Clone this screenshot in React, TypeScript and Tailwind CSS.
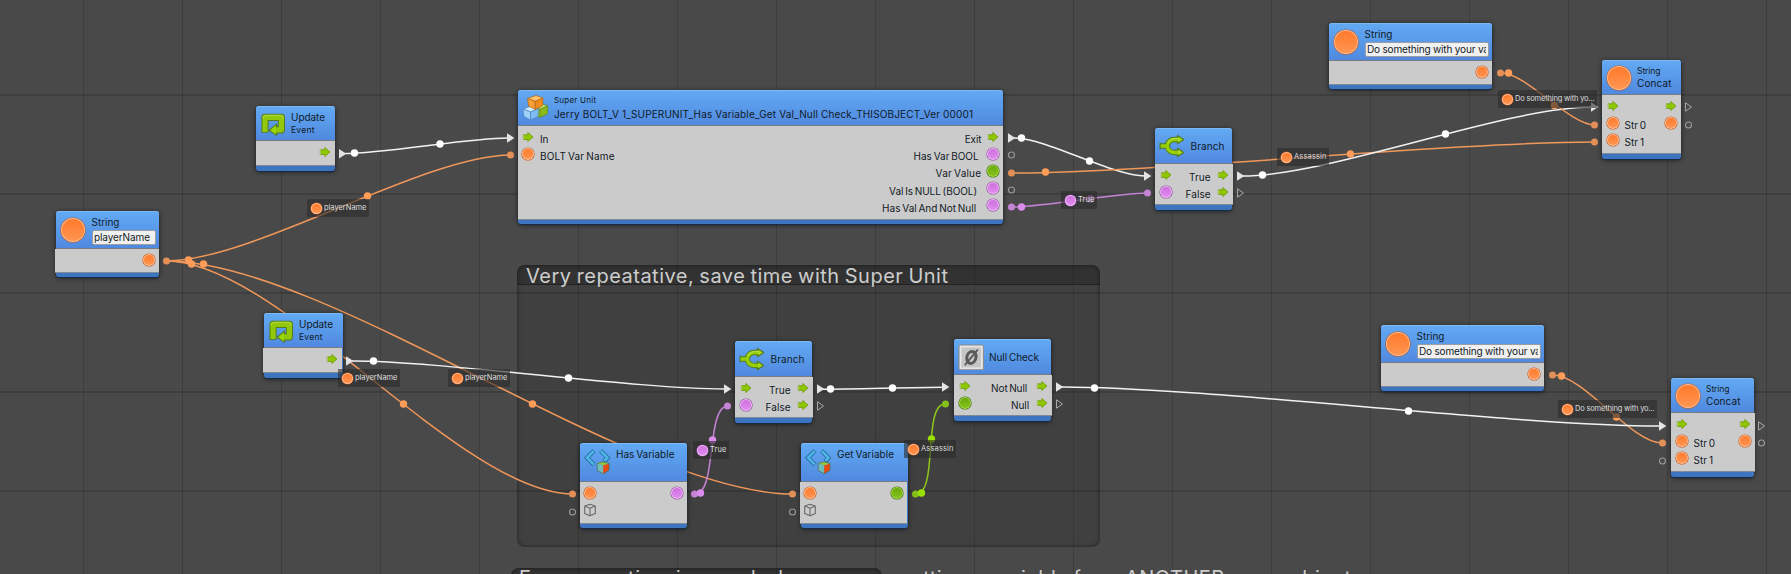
import React, { useLayoutEffect, useRef } from "react";

type Kind = "flow" | "orange" | "purple" | "green" | "cube";

/* Text whose letter spacing is adjusted so that it spans `w` pixels. */
function Fit({ children, w, className = "" }: { children: string; w: number; className?: string }) {
  const ref = useRef<HTMLSpanElement>(null);
  useLayoutEffect(() => {
    const el = ref.current;
    if (!el) return;
    el.style.letterSpacing = "0px";
    const natural = el.getBoundingClientRect().width;
    const gap = (w + 1 - natural) / Math.max(1, children.length - 1);
    el.style.letterSpacing = `${gap}px`;
    el.style.marginRight = `${-gap}px`;
  }, [children, w]);
  return (
    <span ref={ref} className={`inline-block shrink-0 whitespace-pre ${className}`}>
      {children}
    </span>
  );
}

const BALL: Record<string, [string, string, string, string]> = {
  orange: ["#ff7a2b", "#ff9552", "#ffc096", "#c4561c"],
  purple: ["#cf6fdd", "#e08cf0", "#f0bdf8", "#8d4a9b"],
  green: ["#6aa80e", "#85c41c", "#a5d84a", "#3f6d08"],
};

function Ball({ kind, size = 14 }: { kind: string; size?: number }) {
  const [a, b, rim, edge] = BALL[kind];
  const id = `ball-${kind}-${size}`;
  const k = size / 2;
  return (
    <svg width={size} height={size} viewBox={`0 0 ${size} ${size}`} className="block shrink-0">
      <defs>
        <linearGradient id={id} x1="0" y1="0" x2="0" y2="1">
          <stop offset="0" stopColor={a} />
          <stop offset="1" stopColor={b} />
        </linearGradient>
      </defs>
      <circle cx={k} cy={k} r={k - 0.4} fill={edge} />
      <circle cx={k} cy={k} r={k - 1} fill={rim} />
      <circle cx={k} cy={k} r={k - 1.9} fill={`url(#${id})`} />
    </svg>
  );
}

function PortIcon({ kind }: { kind: Kind }) {
  if (kind === "flow")
    return (
      <svg width="14" height="14" viewBox="0 0 14 14" className="block shrink-0">
        <path d="M2.3 4.8H6.8V2.5L12 7L6.8 11.5V9.4H2.3Z" fill="#8fc800" stroke="#6c9a08" strokeWidth=".8" strokeLinejoin="round" />
        <path d="M2.3 4.8V9.4" stroke="#bcc98a" strokeWidth="1" />
      </svg>
    );
  if (kind === "cube")
    return (
      <svg width="14" height="14" viewBox="0 0 14 14" className="block shrink-0" fill="none" stroke="#6a6a6a" strokeWidth="1.1" strokeLinejoin="round">
        <path d="M7 1.2L12.3 3V10.6L7 12.8L1.7 10.6V3ZM1.7 3L7 5.2L12.3 3M7 5.2V12.8" />
      </svg>
    );
  return <Ball kind={kind} />;
}

function UpdateIcon() {
  return (
    <svg width="26" height="26" viewBox="-1 -1 26 26" className="block" fill="none" strokeLinejoin="round">
      <path d="M4 19.8V4.3H20.4V16.8H15" stroke="#55791c" strokeWidth="7.2" />
      <path d="M15.6 10.8V22.6L8 17.2Z" fill="#55791c" stroke="#55791c" strokeWidth="1" />
      <path d="M4 19V4.3H20.4V16.8H14" stroke="#91c90a" strokeWidth="5.2" />
      <path d="M14.8 12V21.4L9.2 17.2Z" fill="#9bd800" />
      <path d="M2 5.4Q2 2.3 5 2.3H19.6Q22.4 2.3 22.4 5.4" stroke="#b5dd4e" strokeWidth=".9" />
    </svg>
  );
}

function BranchIcon() {
  return (
    <svg width="26" height="26" viewBox="-1 -1 26 26" className="block" fill="none" strokeLinejoin="round">
      <path d="M0 12H7Q8.5 5.5 14.5 5.5H18.5M7 12Q8.5 18.5 14.5 18.5H18.5" stroke="#55791c" strokeWidth="5.4" />
      <path d="M0 8.6V15.4M17.4 1.3L24 5.5L17.4 10ZM17.4 14L24 18.5L17.4 22.8Z" stroke="#55791c" strokeWidth="1" fill="#55791c" />
      <path d="M.6 12H7Q8.5 5.5 14.5 5.5H19M7 12Q8.5 18.5 14.5 18.5H19" stroke="#96cf08" strokeWidth="3.5" />
      <path d="M18.2 2.7L22.7 5.5L18.2 8.5ZM18.2 15.5L22.7 18.5L18.2 21.3Z" fill="#a3db1c" />
      <path d="M7.8 9Q10 4.6 14.5 4.6H18.4" stroke="#c3e768" strokeWidth=".8" />
    </svg>
  );
}

function NullIcon() {
  return (
    <svg width="26" height="26" viewBox="-1 -1 26 26" className="block" fill="none">
      <rect x="0" y="0" width="24.4" height="24.8" rx="1" fill="#dadada" stroke="#8d8d8d" />
      <rect x="1.8" y="1.8" width="20.8" height="21.2" fill="#c6c6c6" stroke="#eeeeee" />
      <ellipse cx="12.4" cy="12.4" rx="4.6" ry="6" stroke="#5a5a5a" strokeWidth="3" transform="skewX(-6) translate(1.3 0)" />
      <path d="M5.8 20.2L18.8 4.6" stroke="#5a5a5a" strokeWidth="1.8" />
    </svg>
  );
}

function VariableIcon() {
  return (
    <svg width="26" height="26" viewBox="-1 -1 26 26" className="block" fill="none" strokeLinejoin="miter">
      <path d="M9 .8L2 7.8L9 14.8M15.6 .8L22.6 7.8L19 11.4" stroke="#1d6290" strokeWidth="4.2" />
      <path d="M8.8 1.1L2.1 7.8L8.8 14.5M15.8 1.1L22.5 7.8L19.2 11.1" stroke="#4fb4e6" strokeWidth="2.8" />
      <path d="M12 13.6L18 11.8L24 13.4L18.4 15.6Z" fill="#93c83c" />
      <path d="M12 13.6L18.2 15.6V23.8L12.4 20.6Z" fill="#6fbcb8" />
      <path d="M18.2 15.6L24 13.4V20.2L18.2 23.8Z" fill="#e64c12" />
      <path d="M12 13.6L18 11.8L24 13.4V20.2L18.2 23.8L12.4 20.6Z" stroke="#4f6a4c" strokeWidth=".7" />
    </svg>
  );
}

function Cube({ x, y, c }: { x: number; y: number; c: [string, string, string, string] }) {
  return (
    <g transform={`translate(${x} ${y})`} stroke={c[3]} strokeWidth=".7" strokeLinejoin="round">
      <path d="M0 3L8.4 0L15.4 2.6L7.6 6Z" fill={c[0]} />
      <path d="M0 3L7.6 6V14L1 10.6Z" fill={c[1]} />
      <path d="M7.6 6L15.4 2.6L15 10.4L7.6 14Z" fill={c[2]} />
    </g>
  );
}

function SuperIcon() {
  return (
    <svg width="28" height="28" viewBox="-1 -1 28 28" className="block">
      <Cube x={9.4} y={8.4} c={["#c4e070", "#a6cc38", "#8abb1c", "#5f8a1c"]} />
      <Cube x={0} y={11} c={["#cfeaff", "#9fd0f8", "#7fbcf0", "#4a88c4"]} />
      <Cube x={4.6} y={0.4} c={["#ffc266", "#fa9f34", "#ef8a1c", "#b0681c"]} />
    </svg>
  );
}

interface Label {
  t: string;
  w: number;
  gap?: number;
}
interface Row {
  l?: Kind;
  lt?: Label;
  r?: Kind;
  rt?: Label;
}

interface NodeProps {
  box: string;
  head: string;
  body?: string;
  padL?: string;
  drop?: string;
  icon: React.ReactNode;
  title: React.ReactNode;
  rows: Row[];
}

function UnitNode({ box, head, body = "", padL = "pl-[3px]", drop = "pt-[5px]", icon, title, rows }: NodeProps) {
  return (
    <section
      className={`absolute flex flex-col rounded-[3px] bg-gradient-to-b from-[#4a80cc] to-[#3c74c0] shadow-[0_1px_1px_#182c48,0_1px_5px_rgba(0,0,0,0.6)] ${box}`}
    >
      <header
        className={`flex shrink-0 rounded-t-[3px] border-t border-b border-t-[#7dbaf5] border-b-[#777c84] bg-gradient-to-b from-[#62a9f3] to-[#5089df] pl-1 ${head}`}
      >
        {icon}
        {title}
      </header>
      <div className={`flex flex-1 flex-col border-b border-[#808a98] bg-[#cbcbcb] pt-[2px] ${body}`}>
        {rows.map((row, i) => (
          <div key={i} className="flex h-[17.2px] shrink-0 items-center justify-between">
            <div className={`flex items-center ${padL}`}>
              {row.l && <PortIcon kind={row.l} />}
              {row.lt && (
                <div className={`flex pl-[5px] ${drop}`}>
                  <Fit w={row.lt.w}>{row.lt.t}</Fit>
                </div>
              )}
            </div>
            <div className="flex items-center pr-[3.4px]">
              {row.rt && (
                <div className={`flex ${drop}`} style={{ paddingRight: row.rt.gap ?? 5 }}>
                  <Fit w={row.rt.w}>{row.rt.t}</Fit>
                </div>
              )}
              {row.r && <PortIcon kind={row.r} />}
            </div>
          </div>
        ))}
      </div>
    </section>
  );
}

function StringNode({ box, value, w, input, body }: { box: string; value: string; w: number; input: string; body?: string }) {
  return (
    <UnitNode
      box={box}
      head="h-[38px]"
      body={`mb-[4px] ${body ?? ""}`}
      icon={<div className="pt-[5px]"><Ball kind="orange" size={26} /></div>}
      title={
        <div className="flex flex-col items-start pt-[3px] pl-[5.5px]">
          <Fit w={27}>String</Fit>
          <div className={`mt-px flex h-[15px] rounded-[2px] border border-[#9a9da3] bg-[#f0f0f0] pr-[2px] pl-[1.5px] ${input}`}>
            <div className="flex min-w-0 flex-1 overflow-hidden [word-spacing:0px]">
              <Fit w={w} className="leading-[13px]">{value}</Fit>
            </div>
          </div>
        </div>
      }
      rows={[{ r: "orange" }]}
    />
  );
}

function UpdateNode({ box, body = "" }: { box: string; body?: string }) {
  return (
    <UnitNode
      box={box}
      head="h-[35px]"
      body={`mb-[5px] ${body}`}
      icon={<div className="pt-[5px]"><UpdateIcon /></div>}
      title={
        <div className="flex flex-col items-start pt-[3px] pl-[5px]">
          <Fit w={33}>Update</Fit>
          <Fit w={22.5} className="pt-px text-[8.5px] leading-[10px]">Event</Fit>
        </div>
      }
      rows={[{ r: "flow" }]}
    />
  );
}

function BranchNode({ box }: { box: string }) {
  return (
    <UnitNode
      box={box}
      head="h-[36px]"
      body="mb-[5px] -mr-px"
      padL="pl-[4px]"
      drop="pt-[4px]"
      icon={<div className="pt-[4px]"><BranchIcon /></div>}
      title={<div className="flex pt-[10px] pl-[5.5px]"><Fit w={33}>Branch</Fit></div>}
      rows={[
        { l: "flow", r: "flow", rt: { t: "True", w: 20.5 } },
        { l: "purple", r: "flow", rt: { t: "False", w: 24 } },
      ]}
    />
  );
}

function ConcatNode({ box, body = "" }: { box: string; body?: string }) {
  return (
    <UnitNode
      box={box}
      head="h-[35px]"
      body={`mb-[5px] ${body}`}
      padL="pl-[3.5px]"
      icon={<div className="pt-[4px]"><Ball kind="orange" size={26} /></div>}
      title={
        <div className="flex flex-col items-start pt-[5px] pl-[5px]">
          <Fit w={22.5} className="text-[8.5px] leading-[10px]">String</Fit>
          <Fit w={33.5}>Concat</Fit>
        </div>
      }
      rows={[
        { l: "flow", r: "flow" },
        { l: "orange", lt: { t: "Str 0", w: 20.5 }, r: "orange" },
        { l: "orange", lt: { t: "Str 1", w: 18.5 } },
      ]}
    />
  );
}

function VariableNode({ box, name, w, out, body = "" }: { box: string; name: string; w: number; out: Kind; body?: string }) {
  return (
    <UnitNode
      box={box}
      head="h-[39px]"
      body={`mb-[4px] ${body}`}
      padL="pl-[3px]"
      icon={<div className="pt-[5px]"><VariableIcon /></div>}
      title={<div className="flex pt-[3px] pl-[6px]"><Fit w={w}>{name}</Fit></div>}
      rows={[{ l: "orange", r: out }, { l: "cube" }]}
    />
  );
}

function ValueTag({ box, kind, text, w }: { box: string; kind: string; text: string; w: number }) {
  return (
    <div className={`absolute flex h-[18px] items-center bg-[#2c2c2c]/60 pl-[3px] text-[7.5px] text-[#dedede] [word-spacing:0px] ${box}`}>
      <Ball kind={kind} size={13} />
      <Fit w={w} className="ml-px leading-[10px]">{text}</Fit>
    </div>
  );
}

const COLORS = { w: "#f2f2f2", o: "#f0975a", p: "#c583d6", g: "#8fc61a" };
const DOTS = { w: "#ffffff", o: "#ff9c58", p: "#dc8ced", g: "#9be000" };
type C = keyof typeof COLORS;

const WIRES: [C, number, number, number, number][] = [
  ["w", 345, 153.5, 508, 138],
  ["o", 166, 261, 511, 155],
  ["o", 166, 261, 573, 494],
  ["o", 166, 261, 793, 494],
  ["w", 352, 361, 725, 389],
  ["w", 1014, 138, 1145, 176],
  ["o", 1012, 173, 1595, 142],
  ["p", 1012, 207, 1148, 193],
  ["w", 1243, 176, 1592, 107],
  ["o", 1501, 73, 1595, 125],
  ["o", 1553, 375, 1662, 443],
  ["w", 1062, 387, 1660, 426],
  ["w", 823, 389.3, 943, 387.3],
  ["p", 695, 494, 728, 406],
  ["g", 916, 494, 945, 404],
];

const PULSES: [C, number, number][] = [
  ["w", 354.5, 153], ["w", 440, 144],
  ["o", 188.5, 260], ["o", 191.5, 264], ["o", 203.5, 264],
  ["o", 367.5, 196], ["o", 403.5, 404], ["o", 532.5, 404],
  ["w", 373.5, 361], ["w", 568.5, 378],
  ["w", 1021.5, 138], ["w", 1089.5, 161],
  ["o", 1045.5, 172], ["o", 1350.5, 154],
  ["p", 1021.5, 207], ["p", 1090.5, 199],
  ["w", 1262.5, 175], ["w", 1445.5, 134],
  ["o", 1508.5, 73], ["o", 1554.5, 105.5],
  ["o", 1561.5, 376], ["o", 1616.5, 417],
  ["w", 1094.5, 388], ["w", 1408.5, 411],
  ["w", 830.5, 389], ["w", 892.5, 388],
  ["p", 700.5, 493], ["p", 712.5, 440],
  ["g", 921.5, 493], ["g", 931.5, 439],
];

const ENDS: [C, number, number][] = [
  ["o", 166.5, 261], ["o", 510.5, 155], ["o", 1011.5, 173], ["p", 1011.5, 207],
  ["p", 1147.5, 193], ["o", 1594.5, 125], ["o", 1594.5, 142], ["o", 1500.5, 73],
  ["o", 1552.5, 375], ["o", 1662.5, 443], ["p", 727.5, 406], ["g", 945.5, 404],
  ["o", 572.5, 494], ["o", 792.5, 494], ["p", 694.5, 494], ["g", 915.5, 494],
];
const END_FILL = { w: "#e6e6e6", o: "#e39058", p: "#c583d6", g: "#86c01a" };

const TRIANGLES: [number, number][] = [
  [339, 153.7], [346, 361], [507, 138], [1008, 138], [1144, 176], [1237, 176], [1591, 107],
  [1659, 426], [724, 389], [817, 389], [942, 387], [1056, 387],
];
const OPEN_TRIANGLES: [number, number][] = [[1237.5, 193], [1685.5, 107], [1758.5, 426], [817.5, 406], [1056.5, 404]];
const OPEN_CIRCLES: [number, number][] = [
  [1011.5, 155], [1011.5, 190], [1688.5, 125], [1761.5, 443], [1662.5, 461], [572.5, 512], [792.5, 512],
];

function wirePath(x1: number, y1: number, x2: number, y2: number) {
  const k = Math.hypot(x2 - x1, y2 - y1) * 0.24;
  return `M${x1} ${y1}C${x1 + k} ${y1} ${x2 - k} ${y2} ${x2} ${y2}`;
}

function Wires() {
  return (
    <svg width="1791" height="574" viewBox="0 0 1791 574" className="absolute inset-0" fill="none">
      {WIRES.map(([c, ...p], i) => (
        <path key={i} d={wirePath(...(p as [number, number, number, number]))} stroke={COLORS[c]} strokeWidth="1.5" />
      ))}
      {ENDS.map(([c, x, y], i) => (
        <circle key={i} cx={x} cy={y} r="3.5" fill={END_FILL[c]} />
      ))}
      {TRIANGLES.map(([x, y], i) => (
        <path key={i} d={`M${x} ${y - 4.8}L${x + 7.4} ${y}L${x} ${y + 4.8}Z`} fill="#e4e4e4" />
      ))}
      {OPEN_TRIANGLES.map(([x, y], i) => (
        <path key={i} d={`M${x} ${y - 4.2}L${x + 6} ${y}L${x} ${y + 4.2}Z`} stroke="#a8a8a8" />
      ))}
      {OPEN_CIRCLES.map(([x, y], i) => (
        <circle key={i} cx={x} cy={y} r="3" stroke="#9a9a9a" strokeWidth="1.1" />
      ))}
      {PULSES.map(([c, x, y], i) => (
        <circle key={i} cx={x} cy={y} r="3.7" fill={DOTS[c]} />
      ))}
    </svg>
  );
}

function Grid() {
  const cols = Array.from({ length: 18 }, (_, i) => 83.5 + i * 99);
  const rows = [95, 194, 293, 392, 491];
  return (
    <svg width="1791" height="574" className="absolute inset-0" stroke="#000" strokeOpacity=".14">
      {cols.map((x) => <path key={x} d={`M${x} 0V574`} strokeWidth="1" />)}
      {rows.map((y) => <path key={y} d={`M0 ${y}H1791`} strokeWidth="2" />)}
    </svg>
  );
}

export default function App() {
  return (
    <main
      className="relative h-[574px] w-[1791px] overflow-hidden bg-[#494949] text-[10px] leading-[14px] text-[#111a26] [word-spacing:-1px]"
      style={{ fontFamily: 'Inter, "Liberation Sans", sans-serif' }}
    >
      <section className="absolute top-[265px] left-[517px] h-[282px] w-[583px] rounded-[8px] bg-black/12 shadow-[inset_0_0_4px_rgba(0,0,0,0.5)]">
        <h2 className="flex h-[20px] rounded-t-[8px] border-b border-black/30 bg-black/22 pl-[9px] text-[20px] leading-[23px] text-[#cdcdcd]">
          <Fit w={421}>Very repeatative, save time with Super Unit</Fit>
        </h2>
      </section>
      <section className="absolute top-[568px] left-[511px] h-[200px] w-[371px] rounded-[8px] bg-black/12 shadow-[inset_0_0_4px_rgba(0,0,0,0.5)]">
        <h2 className="flex h-[20px] rounded-t-[8px] bg-black/22 pl-[8px] text-[20px] leading-[21px] text-[#cdcdcd]">
          <Fit w={831}>Even more time is saved when you are getting a variable from ANOTHER game object</Fit>
        </h2>
      </section>
      <Grid />
      <Wires />

      <StringNode box="left-[56px] top-[211px] h-[66px] w-[103px]" body="-ml-px" value="playerName" w={55} input="w-[64px]" />
      <StringNode box="left-[1329px] top-[23px] h-[66px] w-[163px]" value="Do something with your var" w={124.5} input="w-[124px]" />
      <StringNode box="left-[1381px] top-[325px] h-[66px] w-[163px]" value="Do something with your var" w={124.5} input="w-[124px]" />
      <UpdateNode box="left-[256px] top-[106px] h-[65px] w-[79px]" />
      <UpdateNode box="left-[264px] top-[313px] h-[65px] w-[79px]" body="-ml-px mr-px" />

      <UnitNode
        box="left-[518px] top-[90px] h-[134px] w-[485px]"
        head="h-[36px]"
        body="mb-[4px]"
        icon={<div className="pt-[3px]"><SuperIcon /></div>}
        title={
          <div className="flex flex-col items-start pt-[4px] pl-[4px] [word-spacing:0px]">
            <Fit w={41} className="text-[8px] leading-[10px]">Super Unit</Fit>
            <Fit w={418} className="pt-[2px]">Jerry BOLT_V 1_SUPERUNIT_Has Variable_Get Val_Null Check_THISOBJECT_Ver 00001</Fit>
          </div>
        }
        rows={[
          { l: "flow", lt: { t: "In", w: 7.5 }, r: "flow", rt: { t: "Exit", w: 16, gap: 4 } },
          { l: "orange", lt: { t: "BOLT Var Name", w: 73.5 }, r: "purple", rt: { t: "Has Var BOOL", w: 64, gap: 7 } },
          { r: "green", rt: { t: "Var Value", w: 44.5, gap: 4.5 } },
          { r: "purple", rt: { t: "Val Is NULL (BOOL)", w: 87, gap: 8.5 } },
          { r: "purple", rt: { t: "Has Val And Not Null", w: 93, gap: 9.5 } },
        ]}
      />

      <BranchNode box="left-[1155px] top-[128px] h-[82px] w-[77px]" />
      <BranchNode box="left-[735px] top-[341px] h-[82px] w-[77px]" />
      <UnitNode
        box="left-[954px] top-[339px] h-[82px] w-[97px]"
        head="h-[36px]"
        body="mb-[5px] -mr-px"
        padL="pl-[4px]"
        icon={<div className="pt-[4px]"><NullIcon /></div>}
        title={<div className="flex pt-[10px] pl-[5px]"><Fit w={49}>Null Check</Fit></div>}
        rows={[
          { l: "flow", r: "flow", rt: { t: "Not Null", w: 35, gap: 7.5 } },
          { l: "green", r: "flow", rt: { t: "Null", w: 17, gap: 5.5 } },
        ]}
      />
      <ConcatNode box="left-[1602px] top-[60px] h-[99px] w-[79px]" />
      <ConcatNode box="left-[1671px] top-[378px] h-[99px] w-[83px]" body="-mr-px" />
      <VariableNode box="left-[580px] top-[443px] h-[85px] w-[107px]" name="Has Variable" w={57.5} out="purple" />
      <VariableNode box="left-[801px] top-[443px] h-[85px] w-[107px]" body="-ml-px mr-px" name="Get Variable" w={56} out="green" />

      <ValueTag box="left-[307px] top-[199px] w-[62px]" kind="orange" text="playerName" w={41.5} />
      <ValueTag box="left-[338px] top-[369px] w-[62px]" kind="orange" text="playerName" w={41.5} />
      <ValueTag box="left-[448px] top-[369px] w-[62px]" kind="orange" text="playerName" w={41.5} />
      <ValueTag box="left-[1061px] top-[191px] w-[36px]" kind="purple" text="True" w={15.5} />
      <ValueTag box="left-[693px] top-[441px] w-[36px]" kind="purple" text="True" w={15.5} />
      <ValueTag box="left-[1277px] top-[148px] w-[52px]" kind="orange" text="Assassin" w={31.5} />
      <ValueTag box="left-[904px] top-[440px] w-[52px]" kind="orange" text="Assassin" w={31.5} />
      <ValueTag box="left-[1498px] top-[90px] w-[99px]" kind="orange" text="Do something with yo..." w={78.5} />
      <ValueTag box="left-[1558px] top-[400px] w-[99px]" kind="orange" text="Do something with yo..." w={78.5} />
    </main>
  );
}
